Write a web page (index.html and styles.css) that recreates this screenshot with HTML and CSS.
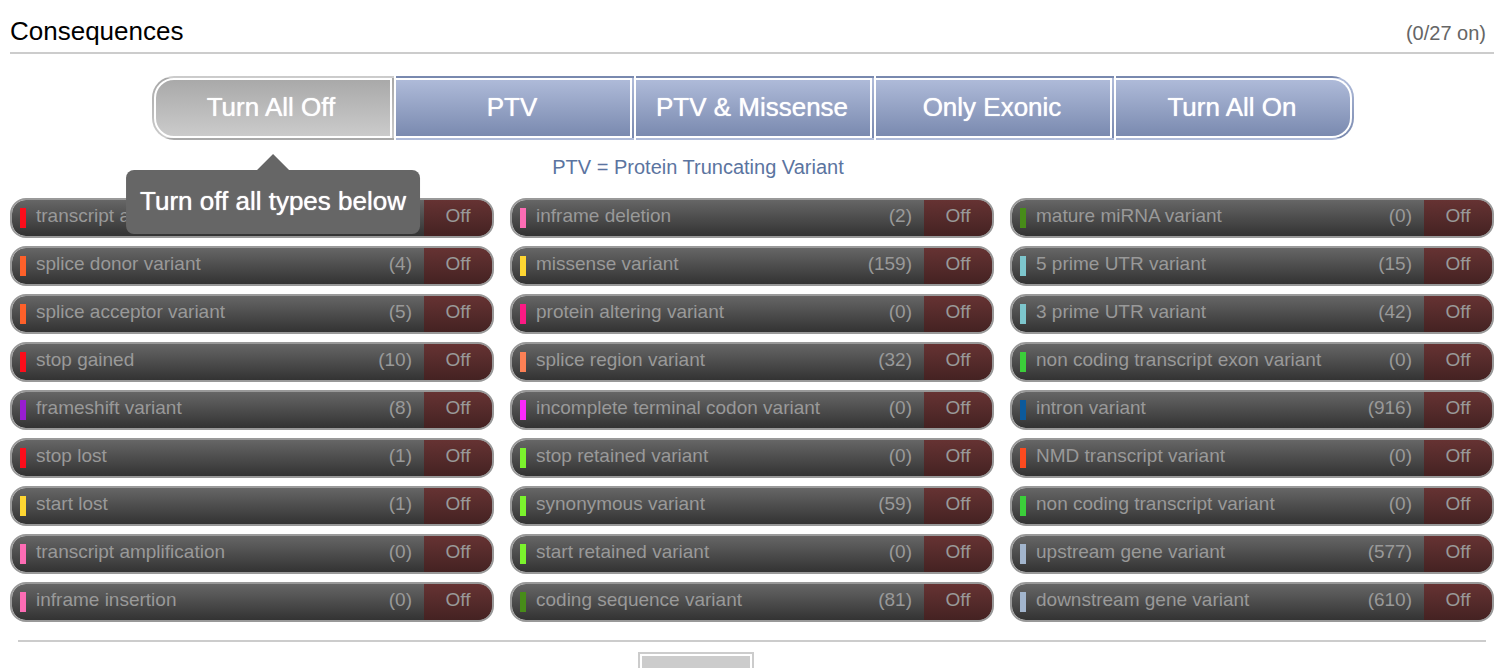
FILE: index.html
```html
<!DOCTYPE html>
<html lang="en">
<head>
<meta charset="utf-8">
<title>Consequences</title>
<link rel="stylesheet" href="styles.css">
</head>
<body>
<main class="panel">
  <header class="panel-header">
    <h1 class="panel-title">Consequences</h1>
    <span class="panel-status">(0/27 on)</span>
  </header>

  <div class="presets">
    <div class="preset-wrap preset-wrap-first">
      <button type="button" class="preset preset-first" aria-describedby="off-tip">Turn All Off</button>
      <div class="tooltip" id="off-tip" role="tooltip">Turn off all types below</div>
    </div>
    <div class="preset-wrap"><button type="button" class="preset">PTV</button></div>
    <div class="preset-wrap"><button type="button" class="preset">PTV &amp; Missense</button></div>
    <div class="preset-wrap"><button type="button" class="preset">Only Exonic</button></div>
    <div class="preset-wrap"><button type="button" class="preset preset-last">Turn All On</button></div>
  </div>
  <p class="note">PTV = Protein Truncating Variant</p>

  <div class="columns">
    <div class="column">
      <button type="button" class="toggle red" aria-pressed="false"><span class="name">transcript ablation</span><span class="count">(0)</span><span class="state">Off</span></button>
      <button type="button" class="toggle orange" aria-pressed="false"><span class="name">splice donor variant</span><span class="count">(4)</span><span class="state">Off</span></button>
      <button type="button" class="toggle orange" aria-pressed="false"><span class="name">splice acceptor variant</span><span class="count">(5)</span><span class="state">Off</span></button>
      <button type="button" class="toggle red" aria-pressed="false"><span class="name">stop gained</span><span class="count">(10)</span><span class="state">Off</span></button>
      <button type="button" class="toggle purple" aria-pressed="false"><span class="name">frameshift variant</span><span class="count">(8)</span><span class="state">Off</span></button>
      <button type="button" class="toggle red" aria-pressed="false"><span class="name">stop lost</span><span class="count">(1)</span><span class="state">Off</span></button>
      <button type="button" class="toggle yellow" aria-pressed="false"><span class="name">start lost</span><span class="count">(1)</span><span class="state">Off</span></button>
      <button type="button" class="toggle pink" aria-pressed="false"><span class="name">transcript amplification</span><span class="count">(0)</span><span class="state">Off</span></button>
      <button type="button" class="toggle pink" aria-pressed="false"><span class="name">inframe insertion</span><span class="count">(0)</span><span class="state">Off</span></button>
    </div>
    <div class="column">
      <button type="button" class="toggle pink" aria-pressed="false"><span class="name">inframe deletion</span><span class="count">(2)</span><span class="state">Off</span></button>
      <button type="button" class="toggle yellow" aria-pressed="false"><span class="name">missense variant</span><span class="count">(159)</span><span class="state">Off</span></button>
      <button type="button" class="toggle deep-pink" aria-pressed="false"><span class="name">protein altering variant</span><span class="count">(0)</span><span class="state">Off</span></button>
      <button type="button" class="toggle coral" aria-pressed="false"><span class="name">splice region variant</span><span class="count">(32)</span><span class="state">Off</span></button>
      <button type="button" class="toggle magenta" aria-pressed="false"><span class="name">incomplete terminal codon variant</span><span class="count">(0)</span><span class="state">Off</span></button>
      <button type="button" class="toggle lime" aria-pressed="false"><span class="name">stop retained variant</span><span class="count">(0)</span><span class="state">Off</span></button>
      <button type="button" class="toggle lime" aria-pressed="false"><span class="name">synonymous variant</span><span class="count">(59)</span><span class="state">Off</span></button>
      <button type="button" class="toggle lime" aria-pressed="false"><span class="name">start retained variant</span><span class="count">(0)</span><span class="state">Off</span></button>
      <button type="button" class="toggle olive" aria-pressed="false"><span class="name">coding sequence variant</span><span class="count">(81)</span><span class="state">Off</span></button>
    </div>
    <div class="column">
      <button type="button" class="toggle olive" aria-pressed="false"><span class="name">mature miRNA variant</span><span class="count">(0)</span><span class="state">Off</span></button>
      <button type="button" class="toggle aqua" aria-pressed="false"><span class="name">5 prime UTR variant</span><span class="count">(15)</span><span class="state">Off</span></button>
      <button type="button" class="toggle aqua" aria-pressed="false"><span class="name">3 prime UTR variant</span><span class="count">(42)</span><span class="state">Off</span></button>
      <button type="button" class="toggle green" aria-pressed="false"><span class="name">non coding transcript exon variant</span><span class="count">(0)</span><span class="state">Off</span></button>
      <button type="button" class="toggle blue" aria-pressed="false"><span class="name">intron variant</span><span class="count">(916)</span><span class="state">Off</span></button>
      <button type="button" class="toggle vermilion" aria-pressed="false"><span class="name">NMD transcript variant</span><span class="count">(0)</span><span class="state">Off</span></button>
      <button type="button" class="toggle green" aria-pressed="false"><span class="name">non coding transcript variant</span><span class="count">(0)</span><span class="state">Off</span></button>
      <button type="button" class="toggle steel" aria-pressed="false"><span class="name">upstream gene variant</span><span class="count">(577)</span><span class="state">Off</span></button>
      <button type="button" class="toggle steel" aria-pressed="false"><span class="name">downstream gene variant</span><span class="count">(610)</span><span class="state">Off</span></button>
    </div>
  </div>

  <footer class="panel-footer">
    <button type="button" class="footer-button"></button>
  </footer>
</main>
</body>
</html>
```

FILE: styles.css
```css
* {
  box-sizing: border-box;
}

body {
  margin: 0;
  background: #fff;
  color: #000;
  font-family: "Liberation Sans", Arial, sans-serif;
  font-size: 19px;
}

button {
  margin: 0;
  font-family: inherit;
  cursor: pointer;
}

.panel {
  height: 100vh;
  overflow: hidden;
  padding: 10px 12px 0 10px;
}

.panel-header {
  display: flex;
  align-items: center;
  justify-content: space-between;
  padding-right: 8px;
  border-bottom: 2px solid #ccc;
}

.panel-title {
  margin: 0;
  font-size: 26px;
  font-weight: 400;
  line-height: 42px;
}

.panel-status {
  padding-top: 4px;
  color: #666;
  font-size: 20px;
  line-height: 38px;
}

/* Preset bar */
.presets {
  display: flex;
  justify-content: center;
  gap: 2px;
  padding: 22px 0 0 2px;
}

.preset-wrap {
  position: relative;
  width: 238px;
}

.preset-wrap-first {
  width: 242px;
}

.preset {
  position: relative;
  display: block;
  width: 100%;
  height: 64px;
  padding: 0 4px 2px 0;
  border: 2px solid transparent;
  border-left-width: 0;
  background: linear-gradient(#b0bcda, #7888ae);
  color: #fff;
  font-size: 26px;
  text-shadow: 0 0 1px #fff;
}

/* White ring between the outer edge and the fill */
.preset::after {
  content: "";
  position: absolute;
  inset: 0;
  border: 2px solid #fff;
  border-left-width: 0;
}

.preset-first {
  border-left-width: 2px;
  border-radius: 22px 0 0 22px;
  background: linear-gradient(#a8a8a8, #ccc);
}

.preset-first::after {
  border-left-width: 2px;
  border-radius: 20px 0 0 20px;
}

.preset-last {
  border-radius: 0 22px 22px 0;
}

.preset-last::after {
  border-radius: 0 20px 20px 0;
}

.tooltip {
  position: absolute;
  z-index: 1;
  top: 94px;
  left: 50%;
  padding: 0 14px 2px;
  border-radius: 8px;
  background: #666;
  color: #fff;
  font-size: 26px;
  line-height: 62px;
  white-space: nowrap;
  transform: translateX(-50%);
  text-shadow: 0 0 1px #fff;
}

.tooltip::before {
  content: "";
  position: absolute;
  bottom: 100%;
  left: 50%;
  margin-left: -16px;
  border: 16px solid transparent;
  border-top-width: 0;
  border-bottom-color: #666;
}

.note {
  margin: 0;
  padding: 12px 108px 16px 0;
  color: #5b74a0;
  font-size: 20px;
  line-height: 30px;
  text-align: center;
}

/* Consequence switches */
.columns {
  display: grid;
  grid-template-columns: repeat(3, 1fr);
  gap: 16px;
}

.column {
  display: flex;
  flex-direction: column;
  gap: 8px;
}

.toggle {
  display: flex;
  align-items: center;
  height: 40px;
  padding: 0 0 0 8px;
  overflow: hidden;
  border: 2px solid #999;
  border-radius: 16px;
  background: linear-gradient(#666, #333) padding-box;
  color: #999;
  font-size: 19px;
  line-height: 32px;
  text-align: left;
}

.toggle::before {
  content: "";
  width: 6px;
  height: 20px;
  margin-right: 10px;
  background: var(--swatch);
}

.name {
  flex: 1;
  height: 36px;
}

.count {
  height: 36px;
  padding-right: 12px;
}

.state {
  width: 68px;
  height: 36px;
  background: linear-gradient(#633, #422);
  text-align: center;
}

.red { --swatch: #fc0d1b; }
.orange { --swatch: #fd602a; }
.purple { --swatch: #981dd0; }
.yellow { --swatch: #fed632; }
.pink { --swatch: #fd6cb4; }
.deep-pink { --swatch: #fc1a84; }
.coral { --swatch: #fd8055; }
.magenta { --swatch: #fc28fc; }
.lime { --swatch: #7bf22d; }
.olive { --swatch: #478c19; }
.aqua { --swatch: #7dc6cd; }
.green { --swatch: #3bce3a; }
.blue { --swatch: #0c5a9c; }
.vermilion { --swatch: #fc4a1f; }
.steel { --swatch: #a2b5cd; }

.panel-footer {
  display: flex;
  justify-content: center;
  margin: 18px 8px 0;
  padding: 10px 112px 0 0;
  border-top: 2px solid #ccc;
}

.footer-button {
  width: 116px;
  height: 64px;
  border: 2px solid #ccc;
  background: #ccc;
  box-shadow: inset 0 0 0 2px #fff;
}
```
